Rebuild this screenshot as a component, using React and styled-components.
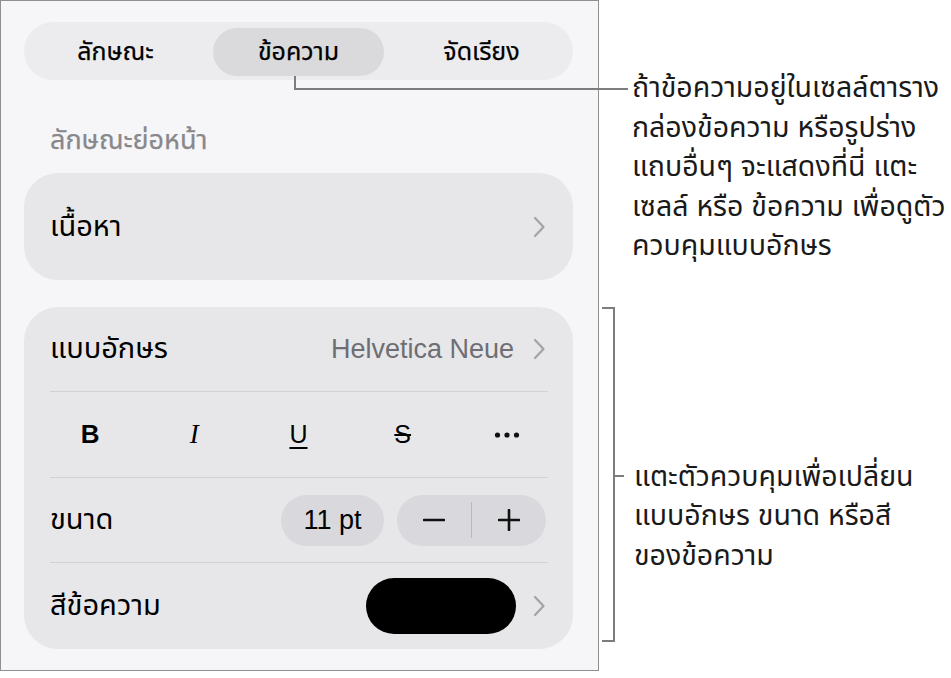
import React from 'react';
import styled, { createGlobalStyle } from 'styled-components';

const GlobalStyle = createGlobalStyle`
  body {
    margin: 0;
    background: #ffffff;
  }
`;

const font = `"Liberation Sans", "Noto Sans Thai", "Noto Sans", "DejaVu Sans", sans-serif`;

const Chevron = () => (
  <svg width="14" height="22" viewBox="0 0 14 22">
    <path d="M3 2 L11.5 11 L3 20" fill="none" stroke="#a2a2a7" strokeWidth="2.2" strokeLinecap="round" strokeLinejoin="round" />
  </svg>
);

const Minus = () => (
  <svg width="22" height="22" viewBox="0 0 22 22">
    <path d="M1 11 H21" stroke="#111" strokeWidth="2.6" strokeLinecap="round" />
  </svg>
);

const Plus = () => (
  <svg width="22" height="22" viewBox="0 0 22 22">
    <path d="M1 11 H21 M11 1 V21" stroke="#111" strokeWidth="2.6" strokeLinecap="round" />
  </svg>
);

const More = () => (
  <svg width="26" height="8" viewBox="0 0 26 8">
    <circle cx="3.5" cy="4" r="2.6" fill="#111" />
    <circle cx="13" cy="4" r="2.6" fill="#111" />
    <circle cx="22.5" cy="4" r="2.6" fill="#111" />
  </svg>
);

const tabs = ['ลักษณะ', 'ข้อความ', 'จัดเรียง'];

const App = () => {
  return (
    <>
      <GlobalStyle />
      <Page>
        <Panel>
          <Tabs>
            {tabs.map((t) => (
              <TabCell key={t}>
                <Tab $active={t === 'ข้อความ'}>{t}</Tab>
              </TabCell>
            ))}
          </Tabs>

          <SectionTitle>ลักษณะย่อหน้า</SectionTitle>

          <Card>
            <Row $h={107}>
              <Label>เนื้อหา</Label>
              <Chevron />
            </Row>
          </Card>

          <Card $top={27}>
            <Row $h={84}>
              <Label>แบบอักษร</Label>
              <Trail>
                <Value>Helvetica Neue</Value>
                <Chevron />
              </Trail>
            </Row>
            <Divider />
            <StyleRow>
              <StyleBtn $bold>B</StyleBtn>
              <StyleBtn $italic>I</StyleBtn>
              <StyleBtn $under>U</StyleBtn>
              <StyleBtn $strike>S</StyleBtn>
              <StyleBtn><More /></StyleBtn>
            </StyleRow>
            <Divider />
            <Row $h={84}>
              <Label>ขนาด</Label>
              <Trail $gap={13}>
                <SizePill>11 pt</SizePill>
                <Stepper>
                  <StepBtn><Minus /></StepBtn>
                  <StepSep />
                  <StepBtn><Plus /></StepBtn>
                </Stepper>
              </Trail>
            </Row>
            <Divider />
            <Row $h={86}>
              <Label>สีข้อความ</Label>
              <Trail $gap={16}>
                <Swatch />
                <Chevron />
              </Trail>
            </Row>
          </Card>
        </Panel>

        <Notes>
          <Note $top={68} $left={33}>
            ถ้าข้อความอยู่ในเซลล์ตาราง<br />
            กล่องข้อความ หรือรูปร่าง<br />
            แถบอื่นๆ จะแสดงที่นี่ แตะ<br />
            เซลล์ หรือ ข้อความ เพื่อดูตัว<br />
            ควบคุมแบบอักษร
          </Note>
          <BracketGroup>
            <Bracket>
              <Tick />
            </Bracket>
            <Note $top={150} $left={19}>
              แตะตัวควบคุมเพื่อเปลี่ยน<br />
              แบบอักษร ขนาด หรือสี<br />
              ของข้อความ
            </Note>
          </BracketGroup>
        </Notes>

        <Leader />
      </Page>
    </>
  );
};

export default App;

const Page = styled.div`
  position: relative;
  display: flex;
  width: 951px;
  height: 678px;
  font-family: ${font};
  color: #000;
`;

const Panel = styled.div`
  box-sizing: border-box;
  width: 599px;
  height: 671px;
  border: 1px solid #8f8f8f;
  background: #f6f6f8;
  padding: 21px 25px 0 23px;
  display: flex;
  flex-direction: column;
`;

const Tabs = styled.div`
  display: grid;
  grid-template-columns: repeat(3, 1fr);
  height: 58px;
  border-radius: 29px;
  background: #ececef;
`;

const TabCell = styled.div`
  display: flex;
  padding: 6px 6px 4px;
`;

const Tab = styled.div`
  flex: 1;
  display: flex;
  align-items: center;
  justify-content: center;
  border-radius: 24px;
  font-size: 25px;
  font-weight: 400;
  -webkit-text-stroke: 0.25px #000;
  background: ${(p) => (p.$active ? '#dadadd' : 'transparent')};
`;

const SectionTitle = styled.div`
  margin: 43px 0 16px 26px;
  height: 34px;
  line-height: 34px;
  font-size: 27px;
  font-weight: 400;
  color: #88888c;
  -webkit-text-stroke: 0.25px #88888c;
`;

const Card = styled.div`
  margin-top: ${(p) => p.$top || 0}px;
  border-radius: 34px;
  background: #e7e7ea;
  display: flex;
  flex-direction: column;
`;

const Row = styled.div`
  height: ${(p) => p.$h}px;
  display: flex;
  align-items: center;
  justify-content: space-between;
  padding: 0 27px 0 26px;
`;

const Label = styled.span`
  font-size: 29px;
`;

const Trail = styled.div`
  display: flex;
  align-items: center;
  gap: ${(p) => p.$gap || 18}px;
`;

const Value = styled.span`
  font-size: 27px;
  color: #6e6e73;
`;

const Divider = styled.div`
  height: 1px;
  margin: 0 25px 0 26px;
  background: #d2d2d6;
`;

const StyleRow = styled.div`
  height: 85px;
  display: grid;
  grid-template-columns: repeat(5, 1fr);
  align-items: center;
  padding: 0 14px;
`;

const StyleBtn = styled.span`
  display: flex;
  justify-content: center;
  align-items: center;
  font-size: ${(p) => (p.$italic ? '27px' : p.$bold ? '26px' : '25px')};
  font-family: ${(p) => (p.$italic ? '"Liberation Serif", serif' : font)};
  font-weight: ${(p) => (p.$bold ? 700 : 400)};
  font-style: ${(p) => (p.$italic ? 'italic' : 'normal')};
  text-decoration: ${(p) => (p.$under ? 'underline' : p.$strike ? 'line-through' : 'none')};
  text-underline-offset: 4px;
  text-decoration-thickness: 2px;
`;

const SizePill = styled.div`
  width: 103px;
  height: 51px;
  border-radius: 26px;
  background: #d9d9dd;
  display: flex;
  align-items: center;
  justify-content: center;
  font-size: 27px;
`;

const Stepper = styled.div`
  width: 149px;
  height: 51px;
  border-radius: 26px;
  background: #d9d9dd;
  display: flex;
  align-items: center;
`;

const StepBtn = styled.div`
  flex: 1;
  display: flex;
  align-items: center;
  justify-content: center;
`;

const StepSep = styled.div`
  width: 1px;
  height: 36px;
  background: #b9b9be;
`;

const Swatch = styled.div`
  width: 150px;
  height: 56px;
  border-radius: 28px;
  background: #000;
`;

const Notes = styled.div`
  display: flex;
  flex-direction: column;
`;

const Note = styled.div`
  margin-top: ${(p) => p.$top}px;
  padding-left: ${(p) => p.$left}px;
  font-size: 28.5px;
  line-height: 39.5px;
  color: #1a1a1a;
  white-space: nowrap;
`;

const BracketGroup = styled.div`
  display: flex;
  align-items: flex-start;
  margin-top: 41px;
  margin-left: 3px;
`;

const Bracket = styled.div`
  position: relative;
  box-sizing: border-box;
  width: 13px;
  height: 335px;
  border: 2.5px solid #7d7d7d;
  border-left: none;
`;

const Tick = styled.div`
  position: absolute;
  left: 100%;
  top: 166px;
  width: 11px;
  height: 2.5px;
  background: #7d7d7d;
`;

const Leader = styled.div`
  position: absolute;
  left: 294px;
  top: 76px;
  width: 332px;
  height: 12px;
  border-left: 2.5px solid #7d7d7d;
  border-bottom: 2.5px solid #7d7d7d;
`;
